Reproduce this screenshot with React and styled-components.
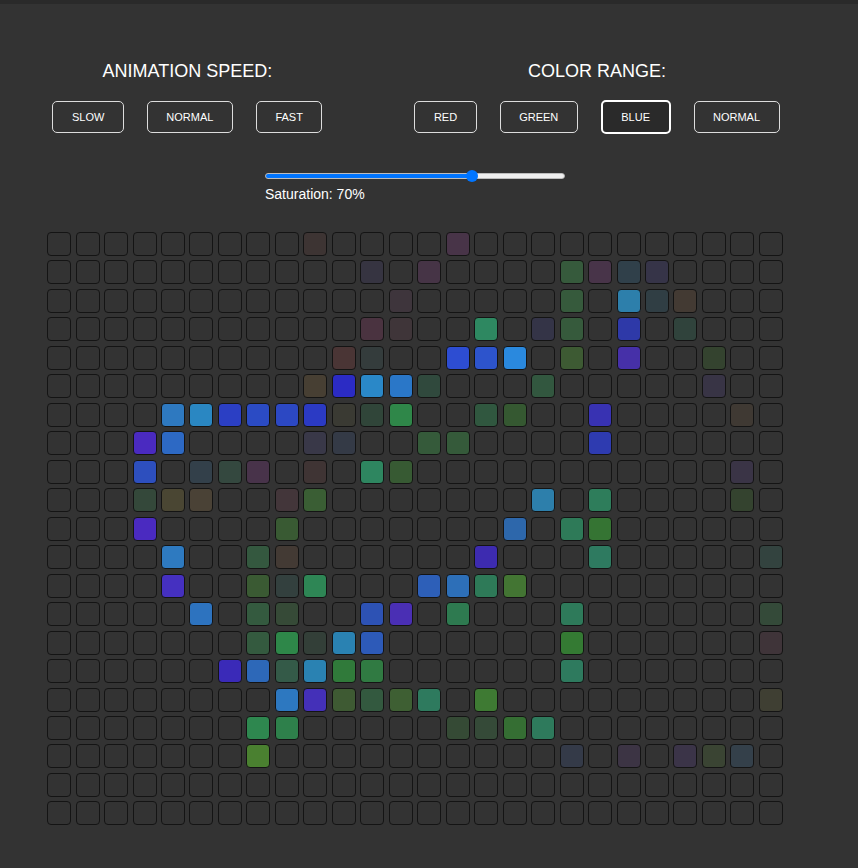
import React, { useState } from 'react'
import styled, { createGlobalStyle } from 'styled-components'

const GlobalStyle = createGlobalStyle`
  body {
    margin: 0;
    background: #333333;
    font-family: "Liberation Sans", Arial, sans-serif;
    color: #ffffff;
  }
`

const TopStrip = styled.div`
  height: 4px;
  background: #2a2a2a;
`

const Page = styled.div`
  width: 830px;
  padding-top: 57px;
  display: flex;
  flex-direction: column;
  align-items: center;
`

const Controls = styled.div`
  display: flex;
  gap: 92px;
  margin-left: 2px;
`

const Section = styled.div`
  display: flex;
  flex-direction: column;
  align-items: center;
`

const Title = styled.h2`
  margin: 0 0 18px;
  font-size: 18px;
  line-height: 21px;
  font-weight: normal;
`

const ButtonRow = styled.div`
  display: flex;
  align-items: center;
  height: 34px;
  gap: ${p => p.$gap}px;
`

const Button = styled.button`
  font-family: "Liberation Sans", Arial, sans-serif;
  font-size: 11px;
  line-height: 12px;
  color: #ffffff;
  text-transform: uppercase;
  padding: 9px 18.5px;
  background: ${p => (p.$active ? '#2a2a2a' : '#333333')};
  border: ${p => (p.$active ? '2px solid #ffffff' : '1px solid #dddddd')};
  border-radius: 5px;
  cursor: pointer;
`

const SliderBlock = styled.div`
  margin-top: 34px;
  display: flex;
  flex-direction: column;
  align-items: flex-start;
`

const Range = styled.input`
  -webkit-appearance: none;
  appearance: none;
  width: 300px;
  height: 16px;
  margin: 0 2px;
  background: transparent;

  &::-webkit-slider-runnable-track {
    height: 6px;
    border-radius: 3px;
    border: 1px solid #bdbdbd;
    box-sizing: border-box;
    background: linear-gradient(
      to right,
      #0075ff 0%,
      #0075ff ${p => p.$fill}%,
      #efefef ${p => p.$fill}%,
      #efefef 100%
    );
  }

  &::-webkit-slider-thumb {
    -webkit-appearance: none;
    width: 12px;
    height: 12px;
    margin-top: -4px;
    border-radius: 50%;
    background: #0075ff;
    border: none;
  }
`

const SliderLabel = styled.label`
  margin-top: 2px;
  padding-left: 2px;
  font-size: 14px;
  line-height: 16px;
`

const Grid = styled.div`
  margin-top: 30px;
  display: grid;
  grid-template-columns: repeat(26, 24px);
  grid-auto-rows: 24px;
  gap: 4.48px;
`

const Cell = styled.div`
  box-sizing: border-box;
  border: 1px solid #141414;
  border-radius: 4px;
  background: ${p => p.$color || '#333333'};
`

const lit = [
  [[9, '#3d3433'], [14, '#483448']],
  [[11, '#363441'], [13, '#463446'], [18, '#365a3c'], [19, '#483449'], [20, '#30404a'], [21, '#363448']],
  [[12, '#3e353c'], [18, '#365a3c'], [20, '#2d7fab'], [21, '#303e44'], [22, '#433a33']],
  [[11, '#4a3340'], [12, '#3f3539'], [15, '#2e8861'], [17, '#343447'], [18, '#365a3c'], [20, '#2e39a8'], [22, '#30433c']],
  [[10, '#4a3535'], [11, '#343c3c'], [14, '#2d4dd2'], [15, '#2d54cc'], [16, '#2a89de'], [18, '#3d5a33'], [20, '#4630a8'], [23, '#34432f']],
  [[9, '#473f33'], [10, '#2b2bc4'], [11, '#2a88c8'], [12, '#2a77c8'], [13, '#30493d'], [17, '#32573f'], [23, '#383445']],
  [[4, '#2e79c0'], [5, '#2a87c2'], [6, '#2b3fc4'], [7, '#2b4bc4'], [8, '#2c48c3'], [9, '#2b3ac4'], [10, '#3a3a33'], [11, '#304539'], [12, '#2f8749'], [15, '#30573f'], [16, '#355831'], [19, '#3832b2'], [24, '#3f3933']],
  [[3, '#4a2ac0'], [4, '#2d69c4'], [9, '#393848'], [10, '#343a46'], [13, '#355a3a'], [14, '#355a3a'], [19, '#2e3bb0']],
  [[3, '#2d4fbe'], [5, '#33404a'], [6, '#34483f'], [7, '#48334a'], [9, '#3f3434'], [11, '#2e8660'], [12, '#375a33'], [24, '#3a3446']],
  [[3, '#34483a'], [4, '#4a4633'], [5, '#4a4236'], [8, '#43363a'], [9, '#3a5e34'], [17, '#2d7fab'], [19, '#2e7d5b'], [24, '#34432f']],
  [[3, '#4a2ac0'], [8, '#395a33'], [16, '#2d67ab'], [18, '#2e7a58'], [19, '#357433']],
  [[4, '#2e7ac0'], [7, '#34583f'], [8, '#433a34'], [15, '#3d2bb0'], [19, '#2e7a60'], [25, '#33433f']],
  [[4, '#4530c0'], [7, '#3a5a33'], [8, '#33403e'], [9, '#2e8655'], [13, '#2d5fb8'], [14, '#2d6fb8'], [15, '#2e7a58'], [16, '#437533']],
  [[5, '#2d73bf'], [7, '#345a3f'], [8, '#364a37'], [11, '#2d52b4'], [12, '#4a2fb4'], [14, '#2e7a50'], [18, '#2e7a5a'], [25, '#344a39']],
  [[7, '#345a3f'], [8, '#2e8749'], [9, '#333f38'], [10, '#2a82b2'], [11, '#2d5ab8'], [18, '#347a33'], [25, '#3f3439']],
  [[6, '#3a2ab8'], [7, '#2d68b8'], [8, '#345a48'], [9, '#2a82b2'], [10, '#307a3a'], [11, '#307a42'], [18, '#2e7a5e']],
  [[8, '#2d78c0'], [9, '#4430b8'], [10, '#3e5a33'], [11, '#33593f'], [12, '#3e5f33'], [13, '#2e7a5e'], [15, '#3e7a33'], [25, '#3f3f33']],
  [[7, '#2e874f'], [8, '#2e804b'], [14, '#354a35'], [15, '#354a38'], [16, '#356e33'], [17, '#2e7a5c']],
  [[7, '#4a8030'], [18, '#343a48'], [20, '#3c3444'], [22, '#3b3448'], [23, '#3a4433'], [24, '#34404a']],
  [],
  [],
]

const COLS = 26

export default function App() {
  const [speed, setSpeed] = useState('normal')
  const [range, setRange] = useState('blue')
  const [saturation, setSaturation] = useState(70)

  const cells = []
  lit.forEach((row, r) => {
    const colors = {}
    row.forEach(([c, color]) => { colors[c] = color })
    for (let c = 0; c < COLS; c++) {
      cells.push(<Cell key={r + '-' + c} $color={colors[c]} />)
    }
  })

  // thumb is 12px on a 300px track, so the fill stops at the thumb centre
  const fill = ((6 + (saturation / 100) * 288) / 300) * 100

  return (
    <>
      <GlobalStyle />
      <TopStrip />
      <Page>
        <Controls>
          <Section>
            <Title>ANIMATION SPEED:</Title>
            <ButtonRow $gap={23}>
              {['slow', 'normal', 'fast'].map(s => (
                <Button key={s} onClick={() => setSpeed(s)}>{s}</Button>
              ))}
            </ButtonRow>
          </Section>
          <Section>
            <Title>COLOR RANGE:</Title>
            <ButtonRow $gap={23}>
              {['red', 'green', 'blue', 'normal'].map(c => (
                <Button key={c} $active={range === c} onClick={() => setRange(c)}>{c}</Button>
              ))}
            </ButtonRow>
          </Section>
        </Controls>
        <SliderBlock>
          <Range
            type="range"
            min="0"
            max="100"
            value={saturation}
            $fill={fill}
            onChange={e => setSaturation(Number(e.target.value))}
          />
          <SliderLabel>Saturation: {saturation}%</SliderLabel>
        </SliderBlock>
        <Grid>{cells}</Grid>
      </Page>
    </>
  )
}
